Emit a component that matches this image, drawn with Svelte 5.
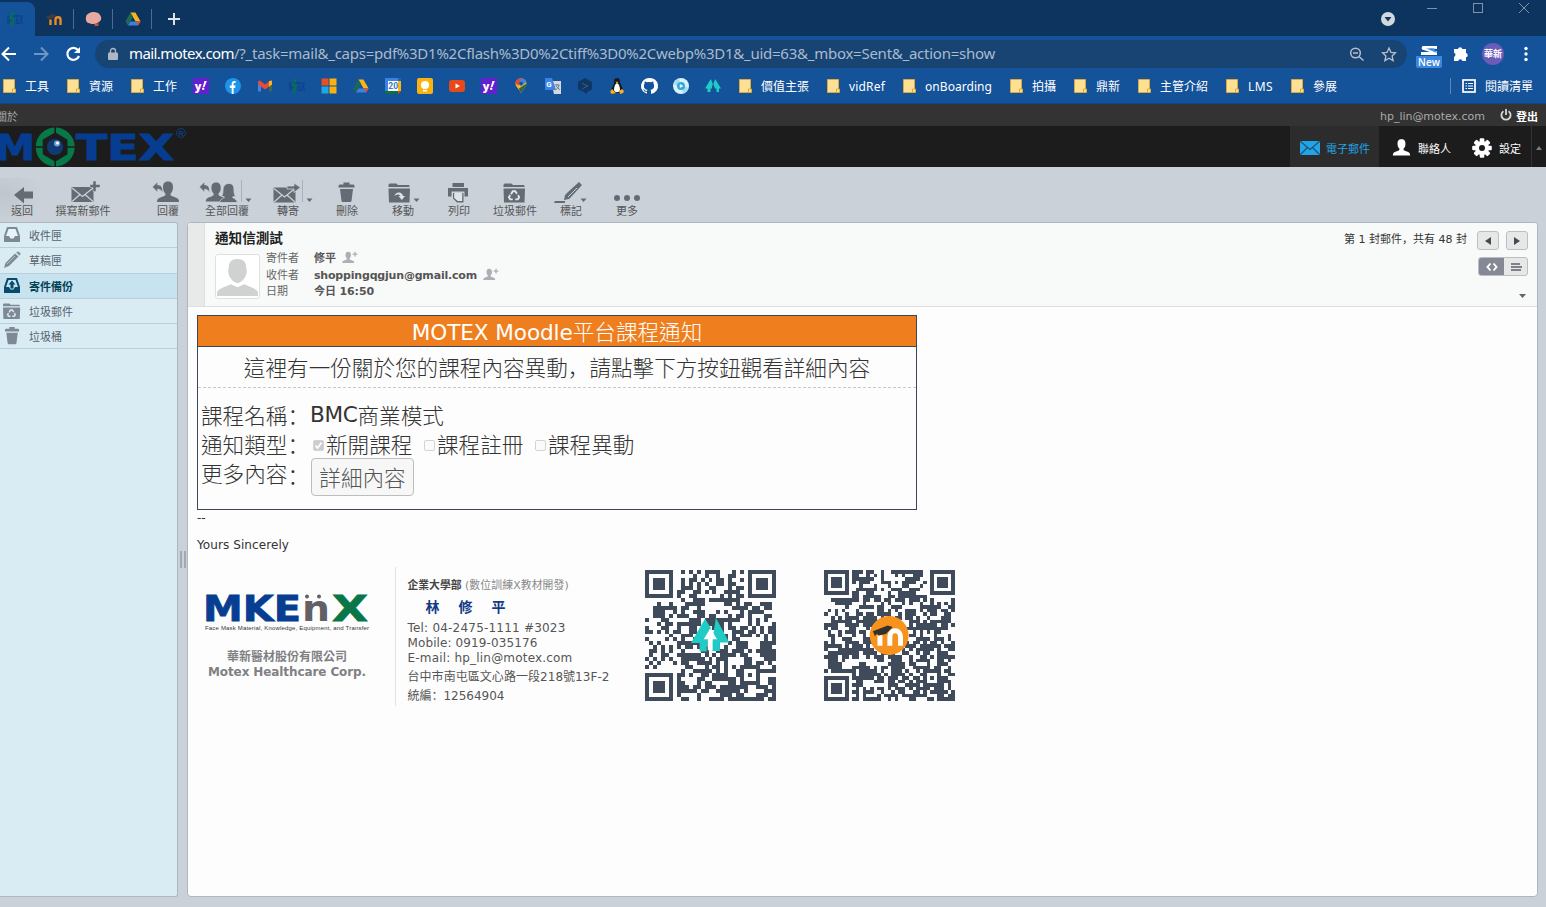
<script>
  // Spreads a run of text evenly over a given width.
  function fit(node, width) {
    const natural = node.getBoundingClientRect().width;
    const count = [...node.textContent].length;
    node.style.letterSpacing = (width - natural) / count + 'px';
  }

  const icons = ['yahoo', 'facebook', 'gmail', 'motex', 'microsoft', 'drive', 'calendar', 'keep', 'youtube', 'yahoo', 'maps', 'translate', 'deepl', 'tux', 'github', 'disc', 'tent'];
  const bookmarks = [
    { label: '工具', w: 24 }, { label: '資源', w: 24 }, { label: '工作', w: 24 },
    ...icons.map((icon) => ({ icon })),
    { label: '價值主張', w: 48 }, { label: 'vidRef', w: 36 }, { label: 'onBoarding', w: 67 },
    { label: '拍攝', w: 24 }, { label: '鼎新', w: 24 }, { label: '主管介紹', w: 48 },
    { label: 'LMS', w: 25 }, { label: '參展', w: 24 }
  ];

  const tools = [
    { id: 'back', label: '返回', x: 0, w: 44 },
    { id: 'compose', label: '撰寫新郵件', x: 44, w: 78 },
    { id: 'reply', label: '回覆', x: 148, w: 40 },
    { id: 'replyall', label: '全部回覆', x: 197, w: 60 },
    { id: 'forward', label: '轉寄', x: 264, w: 48 },
    { id: 'delete', label: '刪除', x: 319, w: 56 },
    { id: 'move', label: '移動', x: 375, w: 56 },
    { id: 'print', label: '列印', x: 431, w: 56 },
    { id: 'junk', label: '垃圾郵件', x: 487, w: 56 },
    { id: 'mark', label: '標記', x: 543, w: 56 },
    { id: 'more', label: '更多', x: 599, w: 56 }
  ];

  const folders = [
    { id: 'inbox', label: '收件匣' },
    { id: 'drafts', label: '草稿匣' },
    { id: 'sent', label: '寄件備份', active: true },
    { id: 'junk', label: '垃圾郵件' },
    { id: 'trash', label: '垃圾桶' }
  ];

  // Module grid of a QR code: finder squares, one alignment square, data cells.
  function qrPath(n, seed) {
    let s = seed;
    const rnd = () => {
      s = (s * 1664525 + 1013904223) >>> 0;
      return s / 4294967296;
    };
    const ring = (r, c, size) => {
      const d = Math.max(Math.abs(r - (size - 1) / 2), Math.abs(c - (size - 1) / 2));
      return size === 7 ? d !== 2 && d < 4 : d !== 1;
    };
    let path = '';
    for (let r = 0; r < n; r++) {
      for (let c = 0; c < n; c++) {
        let on = rnd() < 0.56;
        if (r < 8 && c < 8) on = r < 7 && c < 7 && ring(r, c, 7);
        else if (r < 8 && c >= n - 8) on = r < 7 && c > n - 8 && ring(r, c - n + 7, 7);
        else if (r >= n - 8 && c < 8) on = c < 7 && r > n - 8 && ring(r - n + 7, c, 7);
        else if (r >= n - 9 && r < n - 4 && c >= n - 9 && c < n - 4) on = ring(r - n + 9, c - n + 9, 5);
        if (on) path += `M${c} ${r}h1v1h-1z`;
      }
    }
    return path;
  }
  const qr1 = qrPath(33, 77);
  const qr2 = qrPath(37, 4242);
</script>

{#snippet motexMark()}
  <text x="0" y="13" font-family="Liberation Sans" font-weight="bold" font-size="13" textLength="16" lengthAdjust="spacingAndGlyphs" fill="#0b3f92">M TEX</text>
  <ellipse cx="5.300" cy="8" rx="1.500" ry="6.500" fill="none" stroke="#08744a" stroke-width="1.800" stroke-dasharray="5 1.300" />
{/snippet}

{#snippet driveMark()}
  <path d="M5.400 1.500h5l5.200 9h-5z" fill="#fbb518" /><path d="M5.400 1.500 8 6 3 14.500 .4 10.400z" fill="#1b6a51" /><path d="M3 14.500 5.400 10.500h10.200L13 14.500z" fill="#3b82e0" /><path d="M11 10.500h4.600L13 14.500z" fill="#ea4a2c" />
{/snippet}

{#snippet siteIcon(id)}
  <svg class="site" viewBox="0 0 16 16">
    {#if id === 'folder'}
      <path d="M2.500 1.500h11v9.500h1v3.500h-12z" fill="#fee093" stroke="#dca93f" /><path d="M11.500 14v-3h2" fill="none" stroke="#dca93f" />
    {:else if id === 'yahoo'}
      <rect width="16" height="16" fill="#641fce" /><text x="1.800" y="11.500" font-family="Open Sans" font-weight="800" font-size="11" fill="#fff">y</text><path d="m9.700 9 1.800-6h2.300L11.500 9z" fill="#fff" /><circle cx="10.200" cy="10.800" r="1.200" fill="#fff" />
    {:else if id === 'facebook'}
      <circle cx="8" cy="8" r="8" fill="#1d94e8" /><path d="M6.700 16v-6H4.800V7.500h1.900V5.800c0-2.100 1.300-3.100 3.900-2.700v2H9.500c-.7 0-.9.400-.9 1v1.400h2l-.4 2.500H8.600v6z" fill="#fff" />
    {:else if id === 'gmail'}
      <path d="M1 3.500h3v10H1z" fill="#3c83ea" /><path d="M12 5h3v8.500h-3z" fill="#3a6d48" /><path d="M1 3.500 3 2.500 8 6.500l5-4 2 1v3l-7 5-7-5z" fill="#e84b35" /><path d="m12 3.300 3-.8v4l-3 2.200z" fill="#fbb518" />
    {:else if id === 'motex'}
      {@render motexMark()}
    {:else if id === 'microsoft'}
      <path d="M.5.500h7v7h-7z" fill="#e8511e" /><path d="M8.500.500h7v7h-7z" fill="#fbb20d" /><path d="M.5 8.500h7v7h-7z" fill="#20a7dd" /><path d="M8.500 8.500h7v7h-7z" fill="#fbb20d" />
    {:else if id === 'drive'}
      {@render driveMark()}
    {:else if id === 'calendar'}
      <path d="M0 0h13v3H3v13H0z" fill="#3b83e6" /><path d="M13 0h3v3h-3z" fill="#1764b8" /><path d="M13 3h3v10h-3z" fill="#fbb518" /><path d="M0 13h13v3H0z" fill="#0b7044" /><path d="M13 13h3l-3 3z" fill="#e8452c" /><path d="M3 3h10v10H3z" fill="#fff" /><text x="3.300" y="11" font-family="Roboto" font-weight="bold" font-size="8.500" fill="#3b78c7">20</text>
    {:else if id === 'keep'}
      <rect width="16" height="16" rx="2" fill="#fbb20d" /><circle cx="8" cy="7" r="4" fill="#fff" /><path d="M6 9h4v2H6zM6 12h4v1.500H6z" fill="#fff" />
    {:else if id === 'youtube'}
      <rect y="2" width="16" height="12" rx="3" fill="#e9481b" /><path d="m6.500 5.500 4.500 2.500-4.500 2.500z" fill="#fff" />
    {:else if id === 'maps'}
      <path d="M8 .5c3 0 5.500 2 5.500 5 0 4-4 5-5.500 10C7 11 2.500 9.500 2.500 5.500c0-3 2.500-5 5.500-5z" fill="#fbb518" /><path d="M8 .5c-3 0-5.500 2-5.500 5l3 2L8 5l2-4.200z" fill="#e8472e" /><path d="M8 .5c2.500 0 4.500 1.300 5.200 3.500L8 8.500l-2-3z" fill="#3c83e8" /><path d="M13.500 5.500c0 4-4.500 5.500-5.500 10l-2-5z" fill="#286946" /><circle cx="8" cy="5.500" r="1.800" fill="#13519a" />
    {:else if id === 'translate'}
      <path d="M6 3h10v13H9z" fill="#d5d9de" /><path d="M0 0h7l4 12H0z" fill="#3c83e8" /><text x="1.200" y="9" font-family="Roboto" font-weight="bold" font-size="8" fill="#fff">G</text><path d="M9.500 7h5M12 6v1m2 0c-.5 3-2 4-4 5m1-4 4 4" fill="none" stroke="#697b91" />
    {:else if id === 'deepl'}
      <path d="m8 0 7 4v7.500L10 14v2l-3-2-6-3V4z" fill="#0e3764" /><path d="m5 5 5 3-5 3" fill="none" stroke="#355c8a" /><circle cx="10" cy="8" r="1" fill="#355c8a" />
    {:else if id === 'tux'}
      <path d="M8 0c3 0 3 3 3 5 1 2 3 4 2.500 7L12 15H4l-1.500-3C2 10 5 7 5 5c0-2 0-5 3-5z" fill="#17181c" /><path d="M8 5c2 1 3 4 3 7-1 3-5 3-6 0 0-3 1-6 3-7z" fill="#fff" /><path d="m3 11 4 4-4 1-2-2zM13 11l2 2-1 2-3 1-1-3zM6.500 3.800h3L8 5.500z" fill="#fbae16" />
    {:else if id === 'github'}
      <path fill="#fff" d="M8 0a8 8 0 0 0-2.500 15.600c.4.100.5-.2.500-.4v-1.500C3.800 14.200 3.300 13 3.300 13c-.3-.9-.9-1.200-.9-1.200-.7-.5.100-.5.100-.5.800.100 1.200.8 1.200.8.700 1.300 1.900.9 2.300.7.100-.5.300-.9.500-1.100-1.800-.2-3.600-.9-3.600-4 0-.9.300-1.600.8-2.100-.1-.2-.4-1 .100-2.200 0 0 .7-.2 2.200.8a7.600 7.600 0 0 1 4 0c1.500-1 2.200-.8 2.200-.8.500 1.200.2 2 .100 2.200.5.500.8 1.200.8 2.100 0 3.100-1.900 3.800-3.700 4 .3.300.6.800.6 1.500v2.200c0 .2.100.5.500.4A8 8 0 0 0 8 0z" />
    {:else if id === 'disc'}
      <circle cx="8" cy="8" r="8" fill="#d9f3fa" /><path d="M1 6a7 7 0 0 1 5-5l1 4-3 3zM15 10a7 7 0 0 1-5 5l-1-4 3-3z" fill="#9edcf0" /><circle cx="8" cy="8" r="4" fill="#31a9dc" /><path d="m6.800 6 3.500 2-3.500 2z" fill="#fff" />
    {:else if id === 'tent'}
      <path d="m5.800 1 2 5L7 9v1.500H5.500V14h-3v-3.500H0zM10.200 1 16 10.500h-2V14h-2.500v-3.500H10L8.300 6z" fill="#21cbc5" />
    {/if}
  </svg>
{/snippet}

{#snippet person(x, y, k)}
  <path transform={`translate(${x} ${y}) scale(${k})`} d="M13 0c4 0 5 2.500 5 6 0 3-1.200 5-2.500 6.200 0 1.800.5 2 2.500 2.800 4 1.300 6 2 6 5.500H2C2 17 4 16.300 8 15c2-.8 2.500-1 2.500-2.800C9.200 11 8 9 8 6c0-3.500 1-6 5-6z" />
{/snippet}

{#snippet binShape(x, y)}
  <path transform={`translate(${x} ${y})`} d="M0 3.500C0 2 1 2 2.500 2H5V0h6v2h2.500C15 2 16 2 16 3.500V5H0zM1.500 6.500h13L13 18.500q-.2 1-1.200 1H4.200q-1 0-1.200-1z" />
{/snippet}

{#snippet folderShape(x, y)}
  <path transform={`translate(${x} ${y})`} d="M0 1.500Q0 0 1.500 0H8l1.500 1.500H20q1 0 1 1V3.500H0zM0 5h21.500l-.5 14H.5z" />
{/snippet}

{#snippet recycle(cx, cy, k)}
  <g transform={`translate(${cx} ${cy}) scale(${k})`} fill="none" stroke="#e3e8ec" stroke-width="2.200">
    <path d="M-3.500-1.500-1.500-5h3L3.500-2M5-.5 6 2.500 4.500 4.500H1.500M-1.500 4.500H-4.500L-6 2-4.500-.5" />
  </g>
{/snippet}

{#snippet mailShape(x, y)}
  <g transform={`translate(${x} ${y})`}>
    <rect width="22" height="15" rx="1" />
    <path d="m.5 1 10.500 8.500L21.500 1M.5 14.500l8-7M21.500 14.500l-8-7" fill="none" stroke="#cad1d9" stroke-width="1.200" />
  </g>
{/snippet}

<div class="window">
  <div class="tabs">
    <div class="tab current"><svg class="site" viewBox="0 0 16 16">{@render motexMark()}</svg></div>
    <div class="tab"><svg class="site" viewBox="0 0 16 16"><path d="M3.500 14V8.500M8.500 14V8.500c0-3 5-3 5 0V14" fill="none" stroke="#ed8b22" stroke-width="2.400" /><path d="m-1 6 7-3 3 1-3 3-5 1z" fill="#433c3b" /></svg></div>
    <div class="tab"><svg class="site" viewBox="0 0 16 16"><path d="M0 6C1 1 11-1 14 4c3 4 0 7-3 8l-1 1H8C2 13-1 11 0 6z" fill="#e6aaa0" /><path d="M8 12.500h5l-1 2.500H9z" fill="#cc5a31" /></svg></div>
    <div class="tab"><svg class="site" viewBox="0 0 16 16">{@render driveMark()}</svg></div>
    <svg class="plus" viewBox="0 0 12 12"><path d="M6 0v12M0 6h12" stroke="#dce2e8" stroke-width="2" /></svg>
    <div class="grow"></div>
    <svg class="wincontrols" viewBox="1376 0 170 36">
      <circle cx="1388" cy="19" r="7" fill="#d3d8de" /><path d="M1384.500 17h7l-3.500 4.500z" fill="#14375f" />
      <g fill="none" stroke="#7f92a9"><path d="M1427 8.500h10M1519 3l10 10M1529 3l-10 10" /><rect x="1473.500" y="3.500" width="9" height="9" /></g>
    </svg>
  </div>

  <div class="addressbar">
    <svg class="nav" viewBox="0 36 92 36" fill="none" stroke-width="2">
      <path d="M16 54H3M9 47.500 2.500 54l6.500 6.500" stroke="#fff" /><path d="M34 54h13M41 47.500l6.500 6.500-6.500 6.500" stroke="#6f95c4" /><path d="M78 50a6 6 0 1 0 1 6" stroke="#fff" stroke-width="2.200" /><path d="M80 47v6h-6z" fill="#fff" />
    </svg>
    <div class="omnibox">
      <svg class="lock" viewBox="0 0 10 12"><path d="M1 4.500h8q1 0 1 1V11q0 1-1 1H1q-1 0-1-1V5.500q0-1 1-1z" fill="#aeb7c5" /><path d="M2.500 5V3a2.500 2.500 0 0 1 5 0v2" fill="none" stroke="#aeb7c5" stroke-width="1.300" /></svg>
      <div class="url"><span class="host" use:fit={105}>mail.motex.com</span><span use:fit={761}>/?_task=mail&_caps=pdf%3D1%2Cflash%3D0%2Ctiff%3D0%2Cwebp%3D1&_uid=63&_mbox=Sent&_action=show</span></div>
      <svg class="omniicons" viewBox="1345 40 62 28" fill="none" stroke="#b8bfca" stroke-width="1.500"><circle cx="1355.500" cy="53" r="4.800" /><path d="m1359 56.500 4.500 4M1353 53h5" /><path d="m1389 48 1.900 4.300 4.600.5-3.400 3.200 1 4.600-4.100-2.400-4.100 2.400 1-4.600-3.400-3.200 4.600-.5z" stroke-width="1.300" /></svg>
    </div>
    <div class="ext">
      <svg viewBox="0 0 16 9"><path d="M2 0h14v3L8 2.500l8 3V9H0V6h9L1 3.500Q0 1 2 0z" fill="#fff" /><path d="M5 2.500h8l3 4.500z" fill="#3c8be0" /></svg>
      <span use:fit={22}>New</span>
    </div>
    <svg class="puzzle" viewBox="0 0 16 16"><path d="M5 3a2.200 2.200 0 0 1 4.300 0H13v4a2.200 2.200 0 0 1 0 4.300V15H9.500a2.200 2.200 0 0 0-4.300 0H1v-4a2.300 2.300 0 0 0 0-4.300V3z" fill="#fff" /></svg>
    <div class="avatar">華新</div>
    <svg class="dots" viewBox="0 0 4 16" fill="#fff"><circle cx="2" cy="2.500" r="1.700" /><circle cx="2" cy="8" r="1.700" /><circle cx="2" cy="13.500" r="1.700" /></svg>
  </div>

  <div class="bookmarks">
    {#each bookmarks as b}
      <div class="bookmark">
        {@render siteIcon(b.icon ?? 'folder')}
        {#if b.label}<span class="bl" style:width={b.w + 'px'}><span use:fit={b.w}>{b.label}</span></span>{/if}
      </div>
    {/each}
    <div class="grow"></div>
    <div class="reading">
      <svg viewBox="0 0 14 14"><rect x="1" y="1" width="12" height="12" fill="none" stroke="#fff" stroke-width="1.700" /><path d="M3.500 4.500h1.500M6 4.500h5M3.500 7h1.500M6 7h5M3.500 9.500h1.500M6 9.500h5" stroke="#fff" stroke-width="1.200" /></svg>
      <span class="bl">閱讀清單</span>
    </div>
  </div>

  <div class="topline">
    <span class="about">關於</span>
    <div class="grow"></div>
    <span class="user" use:fit={105}>hp_lin@motex.com</span>
    <svg class="power" viewBox="0 0 12 12" fill="none" stroke="#d8d8d8" stroke-width="1.800"><path d="M3.500 2.200a4.600 4.600 0 1 0 5 0M6 0v6" /></svg>
    <b>登出</b>
  </div>

  <div class="header">
    <svg class="brand" viewBox="0 126 190 41">
      <g font-family="DejaVu Sans" font-weight="bold" fill="#063d91" stroke="#063d91" stroke-width="1">
        <text x="-5" y="160" font-size="36" textLength="40" lengthAdjust="spacingAndGlyphs">M</text>
        <text x="76" y="160" font-size="36" textLength="98" lengthAdjust="spacingAndGlyphs">TEX</text>
      </g>
      <circle cx="55.200" cy="147" r="19.500" fill="#077847" /><path d="M55.200 134 66 140.500v13L55.200 160l-11-6.500v-13z" fill="#1c1c1c" stroke="#1c1c1c" stroke-width="3" stroke-linejoin="round" /><path d="M55.200 126v42M34 147h42" stroke="#1c1c1c" stroke-width="1.600" />
      <circle cx="55" cy="147" r="8" fill="#103a74" /><circle cx="57" cy="143.500" r="3" fill="#6ea3ce" /><circle cx="57.500" cy="143" r="1.500" fill="#fff" />
      <circle cx="181" cy="133" r="4.500" fill="none" stroke="#103e7c" /><text x="178.500" y="136" font-family="Liberation Sans" font-size="7.500" font-weight="bold" fill="#103e7c">R</text>
    </svg>
    <div class="grow"></div>
    <div class="task selected"><svg viewBox="0 0 20 14"><rect width="20" height="14" fill="#22a4e6" /><path d="m0 0 10 8.500L20 0M0 14l7.500-7.500M20 14l-7.500-7.500" fill="none" stroke="#1b5276" stroke-width="1.200" /></svg><span>電子郵件</span></div>
    <div class="task contacts"><svg viewBox="1 0 24 21" fill="#fff">{@render person(0, 0, 1)}</svg><span>聯絡人</span></div>
    <div class="task settings"><svg viewBox="-10 -10 20 20"><g fill="#fff">{#each [0, 45, 90, 135] as a}<rect x="-2.300" y="-9.800" width="4.600" height="19.600" rx="1" transform={`rotate(${a})`} />{/each}</g><circle r="7" fill="#fff" /><circle r="3" fill="#1c1c1c" /></svg><span>設定</span></div>
    <div class="collapse"><svg viewBox="0 0 6 4"><path d="m0 4 3-4 3 4z" fill="#827a7e" /></svg></div>
  </div>

  <div class="toolbar">
    {#each tools as t}
      <div class={['tool', t.id]}>
        <svg viewBox={`${t.x} 178 ${t.w} 27`} style:width={t.w + 'px'} fill="#656b73">
          {#if t.id === 'back'}
            <path d="m14 195 10-8v4.500h9v7h-9v5z" />
          {:else if t.id === 'compose'}
            {@render mailShape(71.500, 187)}<path d="M93 181h3v3.500h4v3h-4v4h-3v-4h-3v-3h3z" stroke="#cad1d9" stroke-width=".5" />
          {:else if t.id === 'reply'}
            {@render person(155, 181.500, 1)}<path d="m152.500 187 5-5v3c4 0 5 2 5 8-1-3-2.500-4-5-4v3z" stroke="#cad1d9" stroke-width=".4" />
          {:else if t.id === 'replyall'}
            {@render person(204, 182.500, 0.930)}<path d="m199.500 187 5-5v3c4 0 5 2 5 8-1-3-2.500-4-5-4v3z" stroke="#cad1d9" stroke-width=".4" /><path stroke="#cad1d9" stroke-width=".8" d="M229 183.500c4 0 5 3 5 6.500 0 3 .5 5 1.500 6l-3 1c0 1 4.500 2 5 5.500h-18c.5-3.500 5-4.500 5-5.500l-3-1c1-1 1.500-3 1.500-6 0-3.500 2-6.500 6-6.500z" /><path d="M245.500 198.500h6l-3 3.500z" /><path d="M241.500 180v22" stroke="#aab1ba" />
          {:else if t.id === 'forward'}
            {@render mailShape(273.500, 187.500)}<path d="M287 186h7v-3l6.500 4.500-6.500 5v-3.500h-7z" stroke="#cad1d9" stroke-width=".8" /><path d="M306.500 198.500h6l-3 3.500z" /><path d="M302.500 180v22" stroke="#aab1ba" />
          {:else if t.id === 'delete'}
            {@render binShape(338.500, 182.500)}
          {:else if t.id === 'move'}
            {@render folderShape(388.500, 183.500)}<path d="M394.500 196q1-4 5-3.500 3 .5 3.500 3.500h2l-3.200 4-3.300-4h2q-1-2-3-1.500-1.500.2-3 1.500z" fill="#dce2e6" /><path d="M413.500 198.500h6l-3 3.500z" />
          {:else if t.id === 'print'}
            <path d="M452.500 183H464v4h-11.500zM448 188h20v8.500h-3.500v-5h-13v5H448zM453 193h10.500v9.500H457l-4-4z" />
            <path d="M454.200 193h8v8h-4.500l-3.500-3z" fill="#dfe4e8" />
          {:else if t.id === 'junk'}
            {@render folderShape(503.500, 183.500)}{@render recycle(514, 195.500, 0.850)}
          {:else if t.id === 'mark'}
            <path d="m565 195 3-3 11-10 3 3-10 11-3 3-5 1zM555 201h10v2h-11z" /><path d="m568 197 9-9" stroke="#cad1d9" stroke-width="1" /><path d="M580.500 198.500h6l-3 3.500z" />
          {:else}
            <circle cx="617" cy="198" r="3" /><circle cx="627" cy="198" r="3" /><circle cx="637" cy="198" r="3" />
          {/if}
        </svg>
        <span>{t.label}</span>
      </div>
    {/each}
  </div>

  <div class="content">
    <div class="sidebar">
      {#each folders as f}
        <div class={['folder', f.id, f.active && 'active']}>
          <svg viewBox="0 0 18 18">
            {#if f.id === 'inbox' || f.id === 'sent'}
              <path d="M4 1h10l3 9v6H1v-6z" /><path d="M5.500 3h7L15 10h-3l-1.500 2.500h-3L6 10H3z" fill={f.active ? '#c7e3ef' : '#e6f3f9'} />
              {#if f.active}<path d="m9 3.500 3.500 4h-2v4h-3v-4h-2z" />{/if}
            {:else if f.id === 'drafts'}
              <path d="m1 17 1.500-5L12 2.500l3.500 3L6 15z" /><path d="m13 1.500 2-1.500 3 2.500L16.500 5zM4 13l8-8" stroke="#d9ecf4" stroke-width=".6" />
            {:else if f.id === 'junk'}
              <g transform="translate(0 1.500) scale(.8 .82)">{@render folderShape(0, 0)}{@render recycle(10.500, 12, 0.800)}</g>
            {:else}
              <g transform="translate(2 0) scale(.88)">{@render binShape(0, 0)}</g>
            {/if}
          </svg>
          <span>{f.label}</span>
        </div>
      {/each}
    </div>
    <div class="splitter"><i></i><i></i></div>

    <div class="mail">
      <div class="mailhead">
        <div class="strip"></div>
        <div class="headinfo">
          <h2>通知信測試</h2>
          <div class="from">
            <div class="photo"><svg viewBox="0 0 42 40" fill="#d0d1d1"><path d="M21 1c6 0 9 3 9 9 2 6-2 14-9 16-7-2-11-10-9-16 0-6 3-9 9-9z" /><path d="M0 39v-4c2-4 8-5 14-8l7 3 7-3c6 3 12 4 14 8v4z" /></svg></div>
            <div class="meta">
              <span>寄件者</span><div><b>修平</b><svg viewBox="0 0 17 13" fill="#acb0b5">{@render person(-1, 0.500, 0.620)}<path d="M12 2.500h2v-2h1.500v2h2V4h-2v2H14V4h-2z" /></svg></div>
              <span>收件者</span><div><b use:fit={163}>shoppingqgjun@gmail.com</b><svg viewBox="0 0 17 13" fill="#acb0b5">{@render person(-1, 0.500, 0.620)}<path d="M12 2.500h2v-2h1.500v2h2V4h-2v2H14V4h-2z" /></svg></div>
              <span>日期</span><div><b use:fit={60}>今日 16:50</b></div>
            </div>
          </div>
        </div>
        <div class="headtools">
          <div class="pager">
            <div class="count"><span use:fit={123}>第 1 封郵件<i class="p">，</i>共有 48 封</span></div>
            <div class="btn"><svg viewBox="0 0 6 8"><path d="M6 0v8L0 4z" /></svg></div>
            <div class="btn"><svg viewBox="0 0 6 8"><path d="M0 0v8l6-4z" /></svg></div>
          </div>
          <div class="toggle">
            <div class="on"><svg viewBox="0 0 12 8"><path d="M4.500.500 1.500 4l3 3.500M7.500.500l3 3.500-3 3.500" fill="none" stroke="#fff" stroke-width="1.900" /></svg></div>
            <div><svg viewBox="0 0 12 8"><path d="M1 1h9M1 4h11M1 7h10" stroke="#5d626d" stroke-width="1.700" /></svg></div>
          </div>
          <svg class="caret" viewBox="0 0 7 4"><path d="M0 0h7L3.500 4z" fill="#60646e" /></svg>
        </div>
      </div>

      <div class="body">
        <div class="card">
          <div class="cardtitle"><span class="latin" use:fit={161}>MOTEX Moodle</span><span>平台課程通知</span></div>
          <div class="cardlead">這裡有一份關於您的課程內容異動<i class="p">，</i>請點擊下方按鈕觀看詳細內容</div>
          <div class="rows">
            <div class="row r1">課程名稱<i class="p">：</i><span class="latin" use:fit={47.500}>BMC</span>商業模式</div>
            <div class="row r2">通知類型<i class="p">：</i>
              <span class="box checked"><svg viewBox="0 0 9 9"><path d="m1.500 4.500 2 2.500 4-5.500" fill="none" stroke="#fff" stroke-width="1.700" /></svg></span><span class="opt">新開課程</span>
              <span class="box"></span><span class="opt">課程註冊</span>
              <span class="box"></span><span class="opt">課程異動</span>
            </div>
            <div class="row r3">更多內容<i class="p">：</i><button>詳細內容</button></div>
          </div>
        </div>
        <div class="dash">--</div>
        <div class="yours"><span use:fit={92}>Yours Sincerely</span></div>

        <div class="signature">
          <div class="company">
            <svg viewBox="204 592 166 40">
              <g font-family="DejaVu Sans" font-weight="bold" font-size="36" stroke-width=".8">
                <text x="203" y="621" textLength="98" lengthAdjust="spacingAndGlyphs" fill="#083e91" stroke="#083e91">MKE</text>
                <text x="302" y="621" textLength="28" lengthAdjust="spacingAndGlyphs" fill="#606065">n</text>
                <text x="332" y="621" textLength="36" lengthAdjust="spacingAndGlyphs" fill="#087747" stroke="#087747">X</text>
              </g>
              <circle cx="307" cy="596.500" r="2" fill="#606065" /><circle cx="319" cy="596.500" r="2" fill="#606065" />
              <text x="205" y="629.500" font-family="Liberation Sans" font-size="6" textLength="164" fill="#33343c">Face Mask Material, Knowledge, Equipment, and Transfer</text>
            </svg>
            <b>華新醫材股份有限公司</b>
            <b class="en"><span use:fit={158}>Motex Healthcare Corp.</span></b>
          </div>
          <div class="contact">
            <div class="dept"><b>企業大學部</b> <span use:fit={104}>(數位訓練X教材開發)</span></div>
            <div class="name"><span>林</span><span>修</span><span>平</span></div>
            <div class="line"><span use:fit={158}>Tel: 04-2475-1111 #3023</span></div>
            <div class="line"><span use:fit={130}>Mobile: 0919-035176</span></div>
            <div class="line"><span use:fit={165}>E-mail: hp_lin@motex.com</span></div>
            <div class="line tall"><span use:fit={202}>台中市南屯區文心路一段218號13F-2</span></div>
            <div class="line tall"><span use:fit={97}>統編<i class="p">：</i>12564904</span></div>
          </div>
          <svg class="qr one" viewBox="0 0 33 33"><path d={qr1} fill="#3f4a5a" shape-rendering="crispEdges" />
            <g transform="translate(11.900 12.600) scale(.93)"><path d="M3.500 0 5 2.500 4 5v2H3.700v1.300H2.200V6H0zM6.500 0 9.700 5.900H7.300v2.300H5.600V6z" fill="#21cbc5" stroke="#21cbc5" stroke-width=".4" /><path d="m4.900 2.200 1.800 3H5.500v3H4.200v-3H3.100z" fill="#fff" /></g>
          </svg>
          <svg class="qr two" viewBox="0 0 37 37"><path d={qr2} fill="#3f4a5a" shape-rendering="crispEdges" />
            <circle cx="18.400" cy="18.500" r="5.500" fill="#f7931c" /><path d="M15.800 21.400v-3M18.600 21.400v-2.600c0-2.200 3-2.200 3 0v2.600" fill="none" stroke="#fff" stroke-width="1.400" /><path d="m13.800 17.300 4.200-1.600 1.400.4-1.900 2-2.200.4-.3-.6-.6.800z" fill="#33302f" />
          </svg>
        </div>
      </div>
    </div>
  </div>
</div>

<style>
  :global(body) { background: #cad1d9; overflow: hidden; }
  .window, .window * { box-sizing: border-box; }
  .window { width: 1546px; height: 907px; display: flex; flex-direction: column; overflow: hidden; background: #cad1d9; font-family: "DejaVu Sans", "Noto Sans CJK TC", sans-serif; font-size: 11px; color: #333; white-space: nowrap; }
  svg { display: block; flex: none; overflow: visible; }
  .grow { flex: 1; }
  .p { font-family: "Noto Sans CJK SC", sans-serif; font-style: normal; }

  .tabs { height: 36px; background: #0c345f; display: flex; align-items: center; flex: none; }
  .site { width: 16px; height: 16px; }
  .tab { width: 39px; height: 20px; margin-top: 2px; padding-left: 12px; border-right: 1px solid #4c6c93; display: flex; align-items: center; }
  .tab:nth-child(2) { border-color: #4c6c93; }
  .tab.current { width: 35px; height: 34px; padding: 0 0 0 7px; border: 0; border-radius: 0 8px 0 0; background: #14529a; }
  .plus { width: 12px; height: 12px; margin: 2px 0 0 16px; }
  .wincontrols { width: 170px; height: 36px; }

  .addressbar { height: 36px; background: #14529a; display: flex; align-items: center; flex: none; }
  .nav { width: 92px; height: 36px; }
  .omnibox { width: 1312px; height: 28px; margin-left: 3px; border-radius: 14px; background: #184473; display: flex; align-items: center; padding-left: 13px; }
  .lock { width: 10px; height: 12px; }
  .url { flex: 1; margin-left: 11px; padding-bottom: 1px; font: 15px/27px "Noto Sans", sans-serif; color: #a9bbd0; }
  .host { color: #fff; }
  .omniicons { width: 62px; height: 28px; }
  .ext { width: 26px; height: 22px; margin: 6px 0 0 9px; display: flex; flex-direction: column; align-items: center; gap: 1px; border-radius: 2px; font: 600 10px/12px "Open Sans", sans-serif; color: #fff; background: linear-gradient(#14529a 10px, #3b87e0 10px); }
  .ext svg { width: 16px; height: 9px; }
  .ext span { display: block; }
  .puzzle { width: 16px; height: 16px; margin-left: 11px; }
  .avatar { width: 22px; height: 22px; border-radius: 50%; margin-left: 13px; background: #6a5cb8; color: #fff; font: bold 9px/21px "Noto Sans CJK TC", sans-serif; text-align: center; }
  .dots { width: 4px; height: 16px; margin-left: 20px; }

  .bookmarks { height: 32px; padding: 0 13px 4px 1px; background: #14529a; display: flex; align-items: center; flex: none; border-bottom: 1px solid #114680; font: 12px/18px "Noto Sans", "Noto Sans CJK TC", sans-serif; color: #fff; }
  .bookmark { display: flex; align-items: center; gap: 8px; padding-right: 16px; }
  .bl { display: block; padding-top: 2px; }
  .reading { display: flex; align-items: center; gap: 9px; padding-left: 11px; border-left: 1px solid #5d86b9; height: 16px; }
  .reading svg { width: 14px; height: 14px; }

  .topline { height: 22px; background: #333; display: flex; align-items: center; flex: none; padding: 1px 8px 0 0; color: #aaa; }
  .about { margin-left: -4px; }
  .user { padding-top: 1px; }
  .power { width: 12px; height: 12px; margin: -2px 4px 0 15px; }
  .topline b { color: #fff; }

  .header { height: 41px; background: #1c1c1c; display: flex; align-items: stretch; flex: none; color: #fff; }
  .brand { width: 190px; height: 41px; overflow: hidden; }
  .task { display: flex; align-items: center; padding-top: 2px; }
  .task span { padding-top: 1px; }
  .task.selected { width: 89px; background: #2c2c2c; padding-left: 10px; gap: 6px; color: #22a4e6; }
  .selected svg { width: 20px; height: 14px; }
  .contacts { padding-left: 13px; gap: 7px; width: 93px; }
  .contacts svg { width: 19px; height: 17px; }
  .settings { width: 59px; gap: 7px; }
  .settings svg { width: 20px; height: 20px; }
  .collapse { width: 15px; border-left: 1px solid #333; display: flex; align-items: center; padding: 2px 0 0 4px; }
  .collapse svg { width: 6px; height: 4px; }

  .toolbar { height: 55px; padding-top: 11px; display: flex; flex: none; color: #555; }
  .tool { display: flex; flex-direction: column; align-items: center; }
  .tool svg { height: 27px; }
  .tool span { line-height: 12px; padding-top: 1px; }
  .tool.back { background: radial-gradient(ellipse 40px 30px at 4px 16px, #c0c6cd, transparent); }
  .tool.reply { margin-left: 26px; }
  .tool.replyall { margin-left: 9px; }
  .tool.forward { margin-left: 7px; }
  .tool.delete { margin-left: 7px; }

  .content { display: flex; height: 675px; }
  .sidebar { width: 178px; border: 1px solid #aeb6c0; border-left: 0; border-radius: 0 3px 3px 0; background: #d9ecf4; }
  .folder { height: 25px; border-bottom: 1px solid #b9cfdb; display: flex; align-items: center; padding: 0 0 1px 3px; gap: 8px; color: #56616d; fill: #7d8997; }
  .folder.drafts { height: 26px; }
  .folder.active { background: #c7e3ef; color: #044256; font-weight: bold; fill: #074b6d; }
  .folder svg { width: 18px; height: 18px; }
  .splitter { width: 9px; display: flex; gap: 2px; align-items: center; justify-content: center; }
  .splitter i { width: 2px; height: 17px; background: #a2a9b2; }
  .mail { width: 1351px; background: #fdfdfd; border: 1px solid #aeb6c0; border-radius: 4px; overflow: hidden; }
  .mailhead { height: 84px; background: #f8faf9; border-bottom: 1px solid #dedfe0; display: flex; }
  .strip { width: 17px; background: #e8e9e9; border-right: 1px solid #dedfe0; }
  .headinfo { padding: 5px 0 0 10px; flex: 1; }
  h2 { margin: 0; font-size: 13.600px; line-height: 20px; color: #222; }
  .from { display: flex; margin-top: 6px; }
  .photo { width: 45px; height: 45px; border: 1px solid #dfe0e0; border-radius: 3px; background: #fff; padding: 3px 1px 0; }
  .photo svg { width: 41px; height: 39px; }
  .meta { display: grid; grid-template-columns: 48px auto; grid-auto-rows: 16.700px; margin: -4px 0 0 6px; line-height: 17px; color: #666; }
  .meta div { display: flex; gap: 6px; }
  .meta b { color: #555; }
  .meta svg { width: 15px; height: 12px; margin-top: 1px; }
  .headtools { width: 193px; padding: 8px 9px 0 0; display: flex; flex-direction: column; align-items: flex-end; }
  .pager { display: flex; align-items: center; }
  .count { line-height: 15px; padding-bottom: 4px; height: 19px; }
  .btn { width: 22px; height: 19px; border: 1px solid #bdbec1; border-radius: 3px; background: #e7e7e7; margin-left: 7px; display: flex; align-items: center; justify-content: center; fill: #444a54; }
  .count + .btn { margin-left: 10px; }
  .btn svg { width: 6px; height: 8px; }
  .toggle { display: flex; margin-top: 7px; width: 50px; height: 19px; border: 1px solid #bdbec1; border-radius: 3px; background: #e7e7e7; overflow: hidden; }
  .toggle div { flex: 1; display: flex; align-items: center; justify-content: center; }
  .toggle .on { background: #858995; flex: 0 0 25px; }
  .toggle svg { width: 12px; height: 8px; }
  .caret { width: 7px; height: 4px; margin: 18px 2px 0 0; }

  .body { padding: 8px 9px; font-size: 12px; }
  .card { width: 720px; height: 195px; border: 1px solid #3c4656; font-size: 21.600px; font-family: "DejaVu Sans", "Noto Sans CJK TC Light", "Noto Sans CJK TC", sans-serif; font-weight: 300; }
  .latin { font-family: "DejaVu Sans", sans-serif; font-weight: 400; }
  .cardtitle { height: 31px; background: #ef7f1e; border-bottom: 1px solid #3c4656; color: #fff; text-align: center; line-height: 33px; }
  .cardlead { height: 41px; border-bottom: 1px dashed #c6c8ca; text-align: center; line-height: 40px; }
  .rows { padding: 11.500px 3px 0; }
  .row { display: flex; align-items: center; height: 29px; }
  .row .latin { margin-left: 1px; }
  .row.r3 { height: 37px; align-items: flex-start; line-height: 34px; }
  .box { width: 11px; height: 11px; border: 1px solid #d2d3d4; border-radius: 2px; background: #fafafa; margin: 5px 2px 0 11.600px; }
  .box.checked { background: #cbcccd; margin-left: 4px; }
  .box svg { width: 9px; height: 9px; }
  button { width: 103px; height: 38px; margin: .5px 0 0 2px; padding: 2px 0 0; border: 1px solid #bcbdbf; border-radius: 4px; background: #f7f7f7; font: inherit; line-height: 36px; color: #555; }
  .dash { height: 17px; line-height: 16px; }
  .yours { height: 40px; line-height: 36px; }
  .signature { display: flex; height: 140px; }
  .company { width: 199px; border-right: 1px solid #e2e2e4; padding: 25px 0 0 7px; color: #808084; height: 139px; }
  .company svg { width: 166px; height: 40px; }
  .company b { display: block; line-height: 15px; text-align: center; width: 166px; }
  .company > b:first-of-type { margin-top: 18px; }
  .contact { padding: 9px 0 0 11.500px; width: 238px; color: #555; }
  .dept { font-size: 10.800px; line-height: 20px; color: #888; }
  .dept b { color: #444; }
  .name { display: flex; gap: 19px; padding-left: 18px; font-size: 14px; line-height: 22px; height: 25px; font-weight: bold; color: #133b85; }
  .line { line-height: 15px; }
  .line.tall { line-height: 18px; }
  .line.tall:nth-last-child(2) { padding-top: 2px; }
  .qr { width: 131px; height: 131px; margin: 3px 0 0 11px; }
  .qr.two { margin-left: 48px; }
</style>
